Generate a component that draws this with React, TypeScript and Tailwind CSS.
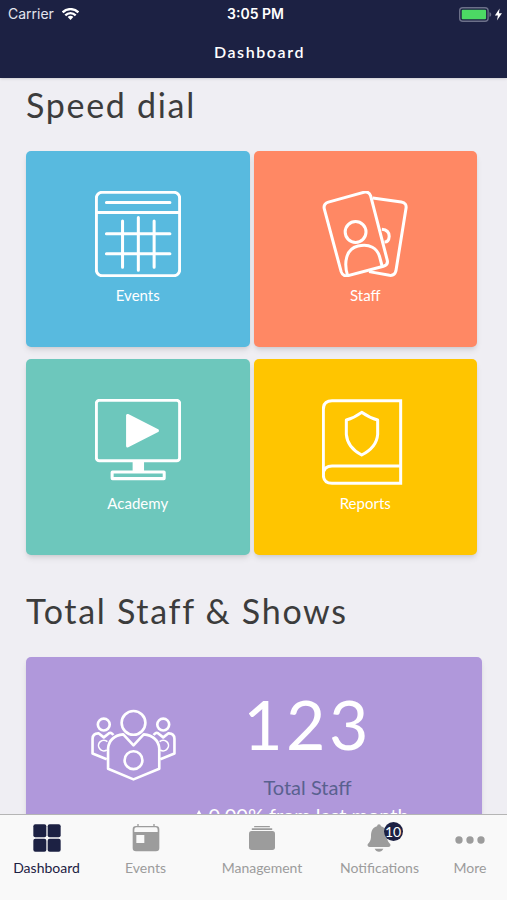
import type { ReactNode } from 'react'

function WifiIcon() {
  return (
    <svg viewBox="0 0 51 36" className="h-3 w-[17px]" fill="none" stroke="#fff" strokeWidth="7">
      <path d="M2 13C15 0 36 0 49 13" />
      <path d="M10 22C19 13 32 13 41 22" />
      <path d="M17 27C22 22 29 22 34 27L25.500 36Z" fill="#fff" stroke="none" />
    </svg>
  )
}

function BatteryIcon() {
  return (
    <svg viewBox="0 0 130 44" className="h-[15px] w-11">
      <rect x="2" y="2" width="84" height="40" rx="9" fill="none" stroke="#6c7089" strokeWidth="4" />
      <rect x="8" y="8" width="72" height="28" rx="3" fill="#4cd964" />
      <path d="M90 15C97 17 97 27 90 29Z" fill="#6c7089" />
      <path d="M120 4L106 25H115L112 40L127 18H118Z" fill="#fff" />
    </svg>
  )
}

function CalendarIcon() {
  return (
    <svg viewBox="45 35 256 256" className="size-[86px]" fill="none" stroke="#fff" strokeWidth="9" strokeLinecap="round">
      <rect x="49" y="39" width="248" height="248" rx="17" />
      <path d="M49 99H297M79 69H268M79 162H268M79 222H268M127 124V262M174 114V271M221 124V262" />
    </svg>
  )
}

function StaffIcon() {
  return (
    <svg viewBox="50 35 256 256" className="size-[86px]" fill="none" stroke="#fff" strokeWidth="9" strokeLinejoin="round">
      <path d="M201 56L286 68Q303 71 300 87L270 273Q266 288 251 286L190 275" />
      <path d="M228 149Q250 151 250 170Q249 187 236 187" />
      <path d="M69 68L174 39Q190 35 195 50L244 240Q248 255 233 259L127 287Q112 290 107 275L57 89Q53 73 69 68Z" />
      <circle cx="150" cy="157" r="31" />
      <path d="M126 286C115 250 120 208 157 199C193 190 214 207 221 229L229 259" />
    </svg>
  )
}

function MonitorIcon() {
  return (
    <svg viewBox="45 42 256 256" className="size-[86px]" fill="none" stroke="#fff" strokeWidth="9" strokeLinejoin="round">
      <rect x="49" y="46" width="248" height="180" rx="9" />
      <path d="M142 91V182L231 136Z" fill="#fff" />
      <path d="M157 227H191V259H157Z" fill="#fff" stroke="none" />
      <rect x="96" y="259" width="155" height="20" rx="1" />
    </svg>
  )
}

function BookIcon() {
  return (
    <svg viewBox="52 42 258 258" className="size-[86px]" fill="none" stroke="#fff" strokeWidth="9">
      <path d="M288 47H82Q56 47 56 73V269Q56 295 82 295H288Z" />
      <path d="M56 269Q56 243 82 243H288" />
      <path d="M171 82Q195 99 219 105V148Q216 187 171 210Q128 187 125 148V105Q148 99 171 82Z" strokeLinejoin="round" />
    </svg>
  )
}

function TeamIcon() {
  return (
    <svg viewBox="58 55 262 218" className="h-[72px] w-[87px]" fill="none" stroke="#fff" strokeWidth="8" strokeLinejoin="round">
      <circle cx="99" cy="102" r="18" />
      <circle cx="279" cy="102" r="18" />
      <path d="M128 134Q121 124 114 129L99 141L84 129Q66 128 65 145V190L108 207" />
      <path d="M250 134Q257 124 264 129L279 141L294 129Q312 128 313 145V190L270 207" />
      <path d="M108 179A16 16 0 1 1 110 154M270 179A16 16 0 1 0 268 154" strokeWidth="5" />
      <circle cx="189" cy="97" r="36" />
      <path d="M189 165L158 132Q116 137 112 174V236L189 268L267 236V174Q263 137 220 132Z" />
      <circle cx="189" cy="210" r="27" />
    </svg>
  )
}

function GridTabIcon() {
  return (
    <svg viewBox="0 0 84 84" className="size-7" fill="currentColor">
      <rect x="1" y="1" width="39" height="39" rx="6" />
      <rect x="44" y="1" width="39" height="39" rx="6" />
      <rect x="1" y="44" width="39" height="39" rx="6" />
      <rect x="44" y="44" width="39" height="39" rx="6" />
    </svg>
  )
}

function EventsTabIcon() {
  return (
    <svg viewBox="0 0 84 84" className="size-7" fill="currentColor">
      <path
        fillRule="evenodd"
        d="M16 0H20V6H64V0H68V6H72Q82 6 82 16V72Q82 82 72 82H12Q2 82 2 72V16Q2 6 12 6H16ZM12 10Q7 10 7 18V24H77V18Q77 10 72 10ZM13 33V57H37V33Z"
      />
    </svg>
  )
}

function ManagementTabIcon() {
  return (
    <svg viewBox="0 0 84 84" className="size-7" fill="currentColor">
      <rect x="18" y="6" width="48" height="4" rx="2" />
      <rect x="11" y="13" width="62" height="5" rx="2" />
      <rect x="3" y="21" width="78" height="57" rx="8" />
    </svg>
  )
}

function BellTabIcon() {
  return (
    <svg viewBox="3 0 84 84" className="size-7" fill="currentColor">
      <path d="M42 1Q47 1 48 7C65 12 66 26 66 40C67 51 70 54 76 61Q78 68 70 69H14Q6 68 8 61C14 54 17 51 18 40C18 26 19 12 36 7Q37 1 42 1Z" />
      <path d="M29 74H55Q51 83 42 83Q33 83 29 74Z" />
    </svg>
  )
}

function MoreTabIcon() {
  return (
    <svg viewBox="0 0 90 84" className="h-7 w-[30px]" fill="currentColor">
      <circle cx="12" cy="48" r="11" />
      <circle cx="45" cy="48" r="11" />
      <circle cx="78" cy="48" r="11" />
    </svg>
  )
}

const tiles = [
  { label: 'Events', color: 'bg-[#58badf]', icon: <CalendarIcon /> },
  { label: 'Staff', color: 'bg-[#ff8864]', icon: <StaffIcon /> },
  { label: 'Academy', color: 'bg-[#6dc7bc]', icon: <MonitorIcon /> },
  { label: 'Reports', color: 'bg-[#ffc500]', icon: <BookIcon /> },
]

const tabs: { label: string; icon: ReactNode; active?: boolean; badge?: number }[] = [
  { label: 'Dashboard', icon: <GridTabIcon />, active: true },
  { label: 'Events', icon: <EventsTabIcon /> },
  { label: 'Management', icon: <ManagementTabIcon /> },
  { label: 'Notifications', icon: <BellTabIcon />, badge: 10 },
  { label: 'More', icon: <MoreTabIcon /> },
]

function Header() {
  return (
    <header className="z-10 h-[78px] shrink-0 bg-[#1c2143] text-white shadow-sm">
      <div className="grid h-7 grid-cols-3 items-center pr-1 pl-2 font-['Inter',sans-serif] text-sm">
        <div className="flex items-center gap-2 text-[#e4e5ee]">
          Carrier
          <WifiIcon />
        </div>
        <span className="text-center font-semibold">3:05 PM</span>
        <div className="flex justify-end">
          <BatteryIcon />
        </div>
      </div>
      <h1 className="pt-3 pl-3 text-center text-base leading-6 font-semibold tracking-widest">Dashboard</h1>
    </header>
  )
}

function TabBar() {
  return (
    <nav className="z-10 grid h-[86px] shrink-0 grid-cols-[93fr_105fr_128fr_107fr_74fr] items-start border-t border-[#b5b5b5] bg-[#f9f9f9] pt-[9px]">
      {tabs.map((tab) => (
        <button
          key={tab.label}
          className={`flex flex-col items-center gap-1.5 text-sm leading-5 ${tab.active ? 'text-[#1c2143]' : 'text-[#9c9c9c]'}`}
        >
          <span className="relative">
            {tab.icon}
            {tab.badge && (
              <span className="absolute -top-0.5 left-[18px] flex size-[19px] items-center justify-center rounded-full bg-[#1c2143] text-sm leading-5 text-white">
                {tab.badge}
              </span>
            )}
          </span>
          {tab.label}
        </button>
      ))}
    </nav>
  )
}

export default function App() {
  return (
    <div className="flex h-screen flex-col bg-[#efeef3] font-['Lato',sans-serif]">
      <Header />
      <main className="min-h-0 flex-1 overflow-y-auto pt-[7px] pr-[25px] pl-[26px] text-[#3c3c3c] [scrollbar-width:none]">
        <h2 className="text-[34px] leading-10 tracking-wider">Speed dial</h2>
        <div className="mt-[26px] mr-[5px] grid grid-cols-2 gap-x-1 gap-y-3">
          {tiles.map((tile) => (
            <button
              key={tile.label}
              className={`flex h-[196px] flex-col items-center gap-2 rounded-[5px] pt-10 text-[15px] leading-5 text-white shadow-md ${tile.color}`}
            >
              {tile.icon}
              {tile.label}
            </button>
          ))}
        </div>

        <h2 className="mt-9 text-[34px] leading-10 tracking-wider">Total Staff &amp; Shows</h2>
        <section className="mt-[26px] flex h-60 rounded-[5px] bg-[#b098db] pt-8 pl-16 text-white shadow-md">
          <div className="pt-5">
            <TeamIcon />
          </div>
          <div className="flex flex-1 flex-col items-center pr-11">
            <p className="text-[68px] leading-[70px] tracking-wider">123</p>
            <p className="mt-3 text-xl leading-8 text-[#59618f]">Total Staff</p>
            <p className="flex items-center gap-1 pr-3 text-xl leading-6 whitespace-nowrap">
              <svg viewBox="0 0 10 10" className="size-2.5" fill="currentColor">
                <path d="M5 0L10 9H0Z" />
              </svg>
              0.00% from last month
            </p>
          </div>
        </section>
      </main>
      <TabBar />
    </div>
  )
}
